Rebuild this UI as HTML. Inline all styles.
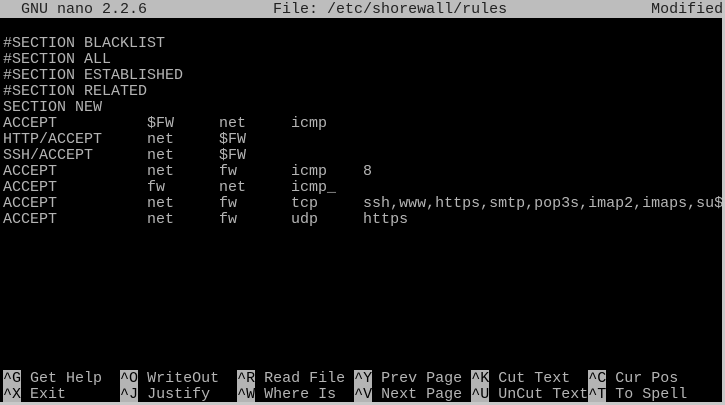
<!DOCTYPE html>
<html><head><style>
html,body{margin:0;padding:0;background:#000;width:725px;height:405px;overflow:hidden}
pre{margin:0;position:absolute;left:3px;font-family:"Liberation Mono",monospace;font-size:15px;line-height:16px;color:#b4b4b4;white-space:pre}
.bar{position:absolute;left:0;top:0;width:725px;height:18px;background:#bdbdbd}
.bar pre{color:#222;top:2px}
.k{background:#b4b4b4;color:#000}
.edge{position:absolute;left:0;top:402px;width:725px;height:3px;background:#c8c8c8}
.edger{position:absolute;left:722px;top:0;width:3px;height:405px;background:#c8c8c8}
</style></head><body>
<div class="bar"><pre>  GNU nano 2.2.6              File: /etc/shorewall/rules                Modified</pre></div>
<pre style="top:36px">#SECTION BLACKLIST
#SECTION ALL
#SECTION ESTABLISHED
#SECTION RELATED
SECTION NEW
ACCEPT          $FW     net     icmp
HTTP/ACCEPT     net     $FW
SSH/ACCEPT      net     $FW
ACCEPT          net     fw      icmp    8
ACCEPT          fw      net     icmp_
ACCEPT          net     fw      tcp     ssh,www,https,smtp,pop3s,imap2,imaps,su$
ACCEPT          net     fw      udp     https</pre>
<pre style="top:371px"><span class="k">^G</span> Get Help  <span class="k">^O</span> WriteOut  <span class="k">^R</span> Read File <span class="k">^Y</span> Prev Page <span class="k">^K</span> Cut Text  <span class="k">^C</span> Cur Pos
<span class="k">^X</span> Exit      <span class="k">^J</span> Justify   <span class="k">^W</span> Where Is  <span class="k">^V</span> Next Page <span class="k">^U</span> UnCut Text<span class="k">^T</span> To Spell</pre>
<div class="edge"></div><div class="edger"></div>
</body></html>
